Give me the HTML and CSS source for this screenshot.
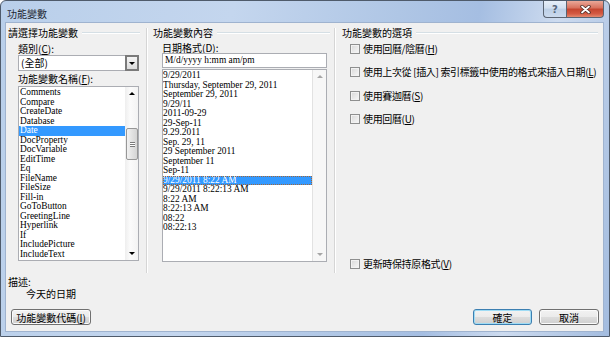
FILE: index.html
```html
<!DOCTYPE html>
<html lang="zh-Hant">
<head>
    <meta charset="UTF-8">
    <title>功能變數</title>
    <link rel="stylesheet" href="styles.css">
</head>
<body>

    <div class="window">

        <!-- Title bar -->
        <div class="titlebar">
            <span class="title">功能變數</span>
            <div class="caption-btns">
                <span class="cap cap-help">?</span>
                <span class="cap cap-close">
                    <svg width="11" height="9" viewBox="0 0 11 9">
                        <path d="M2 1.5 L9 7.5 M9 1.5 L2 7.5" stroke="#4a2a24" stroke-width="3.4" stroke-linecap="round"/>
                        <path d="M2 1.5 L9 7.5 M9 1.5 L2 7.5" stroke="#ffffff" stroke-width="1.8" stroke-linecap="round"/>
                    </svg>
                </span>
            </div>
        </div>

        <div class="client">
            <div class="panes">

                <!-- Pick a field -->
                <section class="pane pane-field">
                    <div class="group-title"><span>請選擇功能變數</span></div>
                    <div class="pane-body">
                        <label class="lbl lbl-cat">類別(<u>C</u>):</label>
                        <div class="combo">
                            <span class="combo-text">(全部)</span>
                            <span class="combo-btn"><span class="tri tri-down"></span></span>
                        </div>
                        <label class="lbl lbl-names">功能變數名稱(<u>F</u>):</label>
                        <div class="listbox list-fields">
                            <ul class="items">
                                <li>Comments</li>
                                <li>Compare</li>
                                <li>CreateDate</li>
                                <li>Database</li>
                                <li class="selected">Date</li>
                                <li>DocProperty</li>
                                <li>DocVariable</li>
                                <li>EditTime</li>
                                <li>Eq</li>
                                <li>FileName</li>
                                <li>FileSize</li>
                                <li>Fill-in</li>
                                <li>GoToButton</li>
                                <li>GreetingLine</li>
                                <li>Hyperlink</li>
                                <li>If</li>
                                <li>IncludePicture</li>
                                <li>IncludeText</li>
                            </ul>
                            <div class="vscroll">
                                <span class="sb-btn"><span class="tri tri-up"></span></span>
                                <span class="thumb"><span class="grip"></span></span>
                                <span class="sb-btn sb-bottom"><span class="tri tri-down"></span></span>
                            </div>
                        </div>
                    </div>
                </section>

                <div class="sep"></div>

                <!-- Field properties -->
                <section class="pane pane-props">
                    <div class="group-title"><span>功能變數內容</span></div>
                    <div class="pane-body">
                        <label class="lbl lbl-fmt">日期格式(<u>D</u>):</label>
                        <div class="textbox">M/d/yyyy h:mm am/pm</div>
                        <div class="listbox list-formats">
                            <ul class="items">
                                <li>9/29/2011</li>
                                <li>Thursday, September 29, 2011</li>
                                <li>September 29, 2011</li>
                                <li>9/29/11</li>
                                <li>2011-09-29</li>
                                <li>29-Sep-11</li>
                                <li>9.29.2011</li>
                                <li>Sep. 29, 11</li>
                                <li>29 September 2011</li>
                                <li>September 11</li>
                                <li>Sep-11</li>
                                <li class="selected focused">9/29/2011 8:22 AM</li>
                                <li>9/29/2011 8:22:13 AM</li>
                                <li>8:22 AM</li>
                                <li>8:22:13 AM</li>
                                <li>08:22</li>
                                <li>08:22:13</li>
                            </ul>
                            <div class="vscroll vscroll-off">
                                <span class="sb-btn"><span class="tri tri-up"></span></span>
                                <span class="sb-btn sb-bottom"><span class="tri tri-down"></span></span>
                            </div>
                        </div>
                    </div>
                </section>

                <div class="sep"></div>

                <!-- Field options -->
                <section class="pane pane-options">
                    <div class="group-title"><span>功能變數的選項</span></div>
                    <div class="pane-body">
                        <div class="check check-1"><span class="box"></span><span class="check-text">使用回曆/陰曆(<u>H</u>)</span></div>
                        <div class="check check-2"><span class="box"></span><span class="check-text">使用上次從 [插入] 索引標籤中使用的格式來插入日期(<u>L</u>)</span></div>
                        <div class="check check-3"><span class="box"></span><span class="check-text">使用賽迦曆(<u>S</u>)</span></div>
                        <div class="check check-4"><span class="box"></span><span class="check-text">使用回曆(<u>U</u>)</span></div>
                        <div class="check check-last"><span class="box"></span><span class="check-text">更新時保持原格式(<u>V</u>)</span></div>
                    </div>
                </section>
            </div>

            <!-- Description -->
            <div class="desc">
                <div class="desc-label">描述:</div>
                <div class="desc-text">今天的日期</div>
            </div>

            <!-- Buttons -->
            <div class="buttons">
                <button class="btn btn-codes">功能變數代碼(<u>I</u>)</button>
                <button class="btn btn-default btn-ok">確定</button>
                <button class="btn btn-cancel">取消</button>
            </div>
        </div>
    </div>

</body>
</html>
```

FILE: styles.css
```css
/* Reset */
* {
    margin: 0;
    padding: 0;
    box-sizing: border-box;
}

body {
    width: 610px;
    height: 337px;
    overflow: hidden;
    font-family: "Noto Sans CJK TC", "Noto Sans", sans-serif;
    font-size: 10px;
    color: #000;
    background: #fff;
}

u {
    text-decoration: underline;
    text-underline-offset: 1px;
}

/* Window frame */
.window {
    width: 610px;
    height: 337px;
    border: 1px solid #4f5b6b;
    border-radius: 6px 6px 0 0;
    padding: 0 5px 4px 4px;
    display: flex;
    flex-direction: column;
    background: linear-gradient(100deg, #b9cfea 0%, #c4d6ee 35%, #afc6e5 60%, #a5bee2 72%, #cddbef 84%, #a3bcdf 100%);
}

.titlebar {
    height: 21px;
    display: flex;
    justify-content: space-between;
    align-items: flex-start;
}

.title {
    margin: 7px 0 0 2px;
    line-height: 11px;
    color: #1e2733;
}

.caption-btns {
    display: flex;
}

.cap {
    height: 17px;
    border: 1px solid #5a6472;
    border-top: none;
    display: flex;
    align-items: center;
    justify-content: center;
}

.cap-help {
    width: 23px;
    border-right: none;
    border-radius: 0 0 0 4px;
    background: linear-gradient(#e6eef8 0%, #d2dfef 45%, #bccfe6 50%, #cbdaee 100%);
    color: #56657a;
    font-family: "DejaVu Sans", sans-serif;
    font-size: 10px;
    font-weight: bold;
}

.cap-close {
    width: 38px;
    border-radius: 0 0 4px 0;
    background: linear-gradient(#eaa898 0%, #d8735f 42%, #c54630 52%, #d45a43 80%, #e48a70 100%);
}

/* Client area */
.client {
    flex: 1;
    background: #f0f0f0;
    border: 1px solid #9fb3cf;
    display: flex;
    flex-direction: column;
}

.panes {
    display: flex;
    margin-top: 5px;
    height: 245px;
}

.sep {
    width: 2px;
    border-left: 1px solid #d5d5d5;
    border-right: 1px solid #fff;
}

.pane {
    display: flex;
    flex-direction: column;
}

.pane-field { width: 140px; }
.pane-props { width: 186px; }
.pane-options { width: 267px; }

.group-title {
    display: flex;
    align-items: center;
    gap: 4px;
    height: 10px;
    line-height: 10px;
    color: #000;
}

.group-title::after {
    content: "";
    flex: 1;
    border-top: 1px solid #d5dfe5;
    border-bottom: 1px solid #fff;
}

.pane-field .group-title { margin: 0 6px 0 2px; }
.pane-props .group-title { margin: 0 4px 0 5px; }
.pane-options .group-title { margin: 0 5px 0 6px; }

.pane-body {
    display: flex;
    flex-direction: column;
    flex: 1;
}

.pane-field .pane-body { margin-left: 12px; width: 121px; }
.pane-props .pane-body { margin-left: 14px; width: 165px; }
.pane-options .pane-body { margin-left: 14px; padding-bottom: 3px; }

.lbl {
    display: block;
    height: 11px;
    line-height: 11px;
}

.lbl-cat { margin-top: 5px; }
.lbl-names { margin-top: 2px; }
.lbl-fmt { margin-top: 5px; height: 10px; line-height: 10px; }

/* Combo box */
.combo {
    margin-top: 1px;
    height: 16px;
    display: flex;
    background: #fff;
    border: 1px solid #abadb3;
}

.combo-text {
    flex: 1;
    padding-left: 2px;
    line-height: 14px;
}

.combo-btn {
    width: 14px;
    margin: -1px -1px -1px 0;
    border: 2px solid #7a7a7a;
    background: linear-gradient(#f4f4f4, #dcdcdc);
    display: flex;
    align-items: center;
    justify-content: center;
}

.tri {
    width: 0;
    height: 0;
    border-left: 3px solid transparent;
    border-right: 3px solid transparent;
}

.tri-down { border-top: 3px solid #000; }
.tri-up { border-bottom: 3px solid #000; }

/* Text box */
.textbox {
    height: 15px;
    background: #fff;
    border: 1px solid #abadb3;
    padding-left: 2px;
    font-family: "Liberation Serif", serif;
    font-size: 9.4px;
    line-height: 13px;
}

/* List boxes */
.listbox {
    display: flex;
    background: #fff;
    border: 1px solid #abadb3;
}

.list-fields {
    margin-top: 2px;
    height: 175px;
}

.list-formats {
    margin-top: 1px;
    height: 193px;
}

.items {
    list-style: none;
    flex: 1;
    padding-top: 1px;
    font-family: "Liberation Serif", serif;
    font-size: 9.4px;
    line-height: 9.5px;
    white-space: nowrap;
    overflow: hidden;
}

.items li {
    height: 9.5px;
}

.list-fields .items li { padding-left: 1px; }
.list-formats .items li { padding-left: 0; }

.items li.selected {
    background: #3399ff;
    color: #fff;
}

.items li.focused {
    outline: 1px dotted #a0663a;
    outline-offset: -1px;
}

/* Scroll bars */
.vscroll {
    width: 13px;
    display: flex;
    flex-direction: column;
    background: linear-gradient(to right, #eeeeee, #fbfbfb 40%, #f3f3f3);
}

.sb-btn {
    height: 13px;
    display: flex;
    align-items: center;
    justify-content: center;
}

.sb-bottom { margin-top: auto; }

.thumb {
    margin: 28px 0 0 1px;
    height: 32px;
    border: 1px solid #979797;
    border-radius: 2px;
    background: linear-gradient(to right, #f2f2f2, #e2e2e2 50%, #d4d4d4);
    display: flex;
    align-items: center;
    justify-content: center;
}

.grip {
    width: 5px;
    height: 5px;
    border-top: 1px solid #7a7a7a;
    border-bottom: 1px solid #7a7a7a;
    background: linear-gradient(#fff 0 1px, #7a7a7a 1px 2px, #fff 2px);
}

.vscroll-off {
    width: 14px;
    border-left: 1px solid #e2e2e2;
    background: #f7f7f7;
}

.vscroll-off .tri-up { border-bottom-color: #a6a6a6; }
.vscroll-off .tri-down { border-top-color: #a6a6a6; }

/* Checkboxes */
.check {
    display: flex;
    align-items: center;
    gap: 3px;
    height: 12px;
    line-height: 12px;
    white-space: nowrap;
}

.check-text {
    letter-spacing: -0.35px;
}

.check-1 { margin-top: 5px; }
.check-2 { margin-top: 11px; }
.check-3 { margin-top: 12px; }
.check-4 { margin-top: 11px; }
.check-last { margin-top: auto; }

.box {
    flex-shrink: 0;
    width: 10px;
    height: 10px;
    border: 1px solid #8e8f8f;
    background: linear-gradient(135deg, #d8d8d8, #f8f8f8);
    box-shadow: inset 0 0 0 1px #f2f2f2;
}

/* Description */
.desc {
    margin: 4px 0 0 2px;
    line-height: 10px;
}

.desc-text {
    margin: 2px 0 0 18px;
}

/* Buttons */
.buttons {
    display: flex;
    margin-top: 10px;
    padding: 0 4px 0 5px;
}

.btn {
    height: 16px;
    border: 1px solid #707070;
    border-radius: 3px;
    background: linear-gradient(#f2f2f2 0%, #ebebeb 50%, #dddddd 51%, #cfcfcf 100%);
    box-shadow: inset 0 0 0 1px #fbfbfb;
    font-family: "Noto Sans CJK TC", sans-serif;
    font-size: 10px;
    line-height: 13px;
    color: #000;
    text-align: center;
}

.btn-codes { width: 80px; }

.btn-ok {
    width: 59px;
    margin-left: auto;
}

.btn-default {
    border-color: #3c7fb1;
    box-shadow: inset 0 0 0 1px #9fdcf5;
}

.btn-cancel {
    width: 60px;
    margin-left: 7px;
}
```
